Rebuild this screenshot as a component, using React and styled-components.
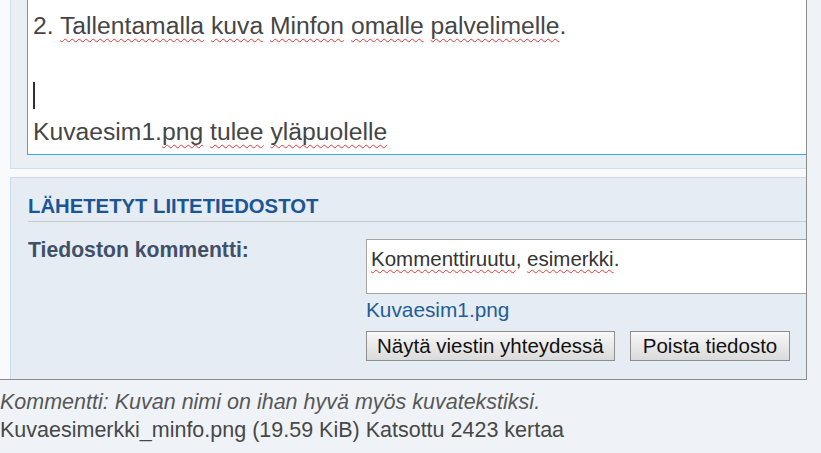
import React from "react";
import styled, { createGlobalStyle } from "styled-components";

// Global page setup
const GlobalStyle = createGlobalStyle`
  body {
    margin: 0;
    background: #eff3f7;
    font-family: "Liberation Sans", Arial, sans-serif;
  }
`;

const Page = styled.div`
  display: flex;
  flex-direction: column;
`;

// The attached screenshot, clipped on the right and at the bottom
const Shot = styled.div`
  box-sizing: border-box;
  width: 807px;
  height: 380px;
  display: flex;
  flex-direction: column;
  gap: 8px;
  padding-left: 10px;
  background: #f8fafb;
  border-right: 1px solid #8c8c8c;
  border-bottom: 1px solid #8c8c8c;
  overflow: hidden;
`;

const EditorPanel = styled.div`
  margin-right: -40px;
  padding: 0 0 13px 16px;
  background: #e9eff2;
  border-left: 1px solid #cddfe9;
  border-bottom: 1px solid #cddfe9;
`;

const Editor = styled.div`
  padding: 8px 0 4px 5px;
  background: #fff;
  border: 1px solid #3aa6ee;
  border-top: none;
  color: #454545;
  font-size: 24.7px;
  line-height: 35.4px;
`;

const Line = styled.div`
  height: 35.4px;
  white-space: nowrap;
`;

const Misspelled = styled.span`
  text-decoration: underline wavy #e23a36;
  text-decoration-thickness: 1px;
  text-underline-offset: ${(p) => p.$offset || 4}px;
  text-decoration-skip-ink: none;
`;

const Caret = styled.span`
  display: inline-block;
  width: 2px;
  height: 27px;
  background: #2f2f2f;
  vertical-align: -4.6px;
`;

const FilesPanel = styled.div`
  flex: 1;
  margin-right: -40px;
  padding: 16px 0 0 17px;
  background: #e5ecf3;
  border-top: 1px solid #c9dbe8;
  border-left: 1px solid #c9dbe8;
`;

const Heading = styled.h3`
  margin: 0;
  padding-bottom: 3.5px;
  border-bottom: 1px solid #c7c9cb;
  color: #1b5596;
  font-size: 20.3px;
  font-weight: bold;
  line-height: 24px;
  text-transform: uppercase;
`;

const Row = styled.div`
  display: flex;
  margin-top: 15.3px;
`;

const Label = styled.div`
  width: 338px;
  flex: none;
  color: #425067;
  font-size: 21.2px;
  font-weight: bold;
  line-height: 25px;
`;

const Field = styled.div`
  flex: 1;
  display: flex;
  flex-direction: column;
  align-items: flex-start;
`;

const CommentBox = styled.div`
  box-sizing: border-box;
  align-self: stretch;
  height: 55px;
  margin-top: 1.5px;
  padding: 7px 4px;
  background: #fff;
  border: 1px solid #a5a5a5;
  color: #333;
  font-size: 20.5px;
  line-height: 23.6px;
`;

const FileLink = styled.a`
  margin-top: 4px;
  color: #1f5e96;
  font-size: 20.8px;
  line-height: 24px;
  text-decoration: none;
`;

const Buttons = styled.div`
  display: flex;
  gap: 15px;
  margin-top: 9px;
`;

const Button = styled.button`
  height: 30px;
  padding: 0 ${(p) => p.$pad || 10}px;
  background: linear-gradient(#f8f8f8, #dadada);
  border: 1px solid #8e8e8e;
  border-radius: 0;
  color: #111;
  font-family: "Liberation Sans", Arial, sans-serif;
  font-size: 20.5px;
  line-height: 28px;
`;

const Caption = styled.div`
  padding-top: 7.6px;
  font-size: 21.5px;
  line-height: 28.4px;
  white-space: nowrap;
`;

const Comment = styled.div`
  color: #575757;
  font-style: italic;
`;

const Meta = styled.div`
  color: #474747;
`;

function App() {
  return (
    <Page>
      <GlobalStyle />
      <Shot>
        <EditorPanel>
          <Editor>
            <Line>
              2. <Misspelled>Tallentamalla</Misspelled>{" "}
              <Misspelled>kuva</Misspelled> <Misspelled>Minfon</Misspelled>{" "}
              <Misspelled>omalle</Misspelled>{" "}
              <Misspelled>palvelimelle</Misspelled>.
            </Line>
            <Line />
            <Line>
              <Caret />
            </Line>
            <Line>
              Kuvaesim1.<Misspelled>png</Misspelled>{" "}
              <Misspelled>tulee</Misspelled>{" "}
              <Misspelled>yläpuolelle</Misspelled>
            </Line>
          </Editor>
        </EditorPanel>

        <FilesPanel>
          <Heading>Lähetetyt liitetiedostot</Heading>
          <Row>
            <Label>Tiedoston kommentti:</Label>
            <Field>
              <CommentBox>
                <Misspelled $offset={3}>Kommenttiruutu</Misspelled>,{" "}
                <Misspelled $offset={3}>esimerkki</Misspelled>.
              </CommentBox>
              <FileLink href="#">Kuvaesim1.png</FileLink>
              <Buttons>
                <Button>Näytä viestin yhteydessä</Button>
                <Button $pad={12}>Poista tiedosto</Button>
              </Buttons>
            </Field>
          </Row>
        </FilesPanel>
      </Shot>

      <Caption>
        <Comment>Kommentti: Kuvan nimi on ihan hyvä myös kuvatekstiksi.</Comment>
        <Meta>Kuvaesimerkki_minfo.png (19.59 KiB) Katsottu 2423 kertaa</Meta>
      </Caption>
    </Page>
  );
}

export default App;
